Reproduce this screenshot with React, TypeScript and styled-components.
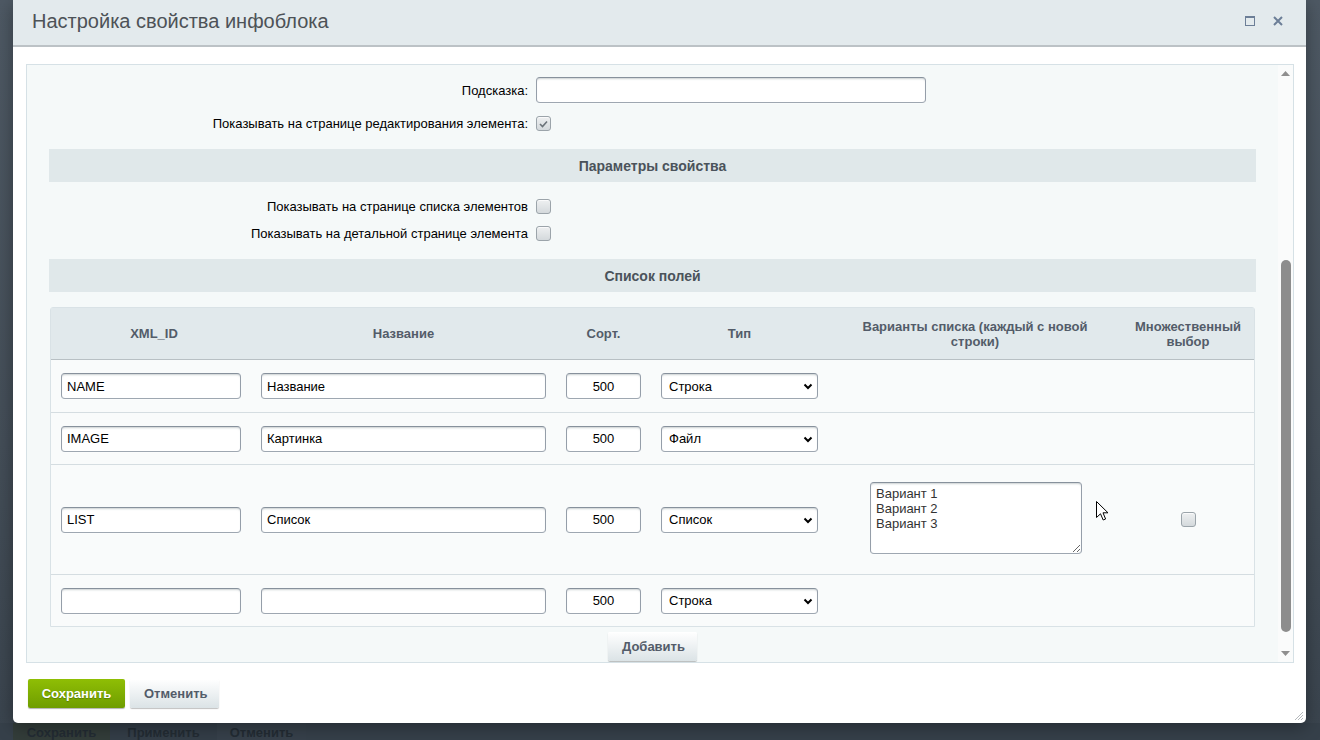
import styled, { createGlobalStyle } from 'styled-components';

const GlobalStyle = createGlobalStyle`
  html, body {
    margin: 0;
    padding: 0;
  }
  body {
    font-family: "Liberation Sans", Arial, sans-serif;
    font-size: 13px;
    background: #3b4550;
    overflow: hidden;
  }
  * {
    box-sizing: border-box;
  }
`;

const Page = styled.div`
  position: relative;
  width: 1320px;
  height: 740px;
  overflow: hidden;
  display: flex;
  flex-direction: column;
  background: linear-gradient(to bottom, #4e5964 0%, #444e58 60%, #3a444e 100%);
`;

const Dialog = styled.div`
  position: relative;
  margin-left: 13px;
  width: 1293px;
  height: 723px;
  flex-shrink: 0;
  background: #fff;
  border-radius: 0 0 5px 5px;
  box-shadow: 0 4px 18px rgba(0, 0, 0, 0.35);
  display: flex;
  flex-direction: column;
`;

const Header = styled.div`
  height: 47px;
  flex-shrink: 0;
  display: flex;
  align-items: center;
  justify-content: space-between;
  padding: 0 23px 3px 19px;
  background: #e3eaed;
  border-bottom: 2px solid #bcc2c6;
`;

const Title = styled.h1`
  margin: 0;
  font-size: 20px;
  font-weight: 400;
  color: #4d5257;
`;

const HeaderTools = styled.div`
  display: flex;
  align-items: center;
  gap: 17px;
`;

const ToolButton = styled.span`
  display: flex;
  width: 11px;
  height: 11px;
  align-items: center;
  justify-content: center;
  cursor: pointer;
`;

const Body = styled.div`
  padding: 17px 12px 0 13px;
`;

const ScrollBox = styled.div`
  height: 599px;
  display: flex;
  border: 1px solid #d6e1e6;
  background: #f5f9f9;
  overflow: hidden;
`;

const Content = styled.div`
  flex: 1;
  padding: 8px 22px 0 22px;
  display: flex;
  flex-direction: column;
`;

const Track = styled.div`
  width: 15px;
  flex-shrink: 0;
  display: flex;
  flex-direction: column;
  align-items: center;
  background: #fafbfb;
`;

const Arrow = styled.div`
  height: 17px;
  display: flex;
  align-items: center;
  justify-content: center;
`;

const Thumb = styled.div<{ $top: number; $height: number }>`
  width: 10px;
  margin-top: ${(p) => p.$top}px;
  height: ${(p) => p.$height}px;
  border-radius: 5px;
  background: #8d8d8d;
`;

const TrackFill = styled.div`
  flex: 1;
`;

const FormRow = styled.div<{ $h: number; $mt?: number }>`
  display: grid;
  grid-template-columns: 487px 1fr;
  align-items: center;
  height: ${(p) => p.$h}px;
  margin-top: ${(p) => p.$mt ?? 0}px;
`;

const Label = styled.label`
  text-align: right;
  padding-right: 8px;
  color: #000;
  font-size: 13px;
`;

const Band = styled.div<{ $mt: number }>`
  height: 33px;
  margin-top: ${(p) => p.$mt}px;
  display: flex;
  align-items: center;
  justify-content: center;
  background: #e0e8ea;
  color: #4b535b;
  font-weight: 700;
  font-size: 14px;
`;

const inputBase = `
  height: 26px;
  border: 1px solid;
  border-color: #87919c #959ea9 #9ea7b1 #959ea9;
  border-radius: 4px;
  background: #fff;
  box-shadow: 0 1px 0 0 rgba(255, 255, 255, 0.3), inset 0 2px 2px -1px rgba(180, 188, 191, 0.7);
  font-family: "Liberation Sans", Arial, sans-serif;
  font-size: 13px;
  color: #000;
  outline: none;
`;

const TextInput = styled.input<{ $w: number; $center?: boolean }>`
  ${inputBase}
  width: ${(p) => p.$w}px;
  padding: 0 5px;
  text-align: ${(p) => (p.$center ? 'center' : 'left')};
`;

const SelectWrap = styled.div`
  position: relative;
  width: 157px;
`;

const Select = styled.select`
  ${inputBase}
  appearance: none;
  width: 100%;
  padding: 0 20px 0 7px;
`;

const Chevron = styled.svg`
  position: absolute;
  right: 5px;
  top: 10px;
  pointer-events: none;
`;

const TextArea = styled.textarea`
  ${inputBase}
  width: 212px;
  height: 72px;
  margin: 0 0 3px 2px;
  padding: 3px 5px;
  line-height: 15px;
  resize: both;
  color: #333;
`;

const Check = styled.span`
  display: inline-flex;
  align-items: center;
  justify-content: center;
  width: 15px;
  height: 15px;
  border: 1px solid #9ba4aa;
  border-radius: 3px;
  background: linear-gradient(to bottom, #eef0f1 0%, #d4d9dc 100%);
  box-shadow: inset 0 1px 0 rgba(255, 255, 255, 0.7);
`;

const Table = styled.div`
  margin: 15px 1px 0;
  border: 1px solid #d9e2e6;
  border-radius: 3px 3px 0 0;
  background: #f9fbfb;
`;

const columns = '200px 305px 95px 177px 294px 1fr';

const HeadRow = styled.div`
  display: grid;
  grid-template-columns: ${columns};
  height: 52px;
  background: #e1e9ec;
  border-bottom: 1px solid #b8c0c4;
`;

const HeadCell = styled.div<{ $shift?: number }>`
  display: flex;
  align-items: center;
  justify-content: center;
  padding-left: ${(p) => p.$shift ?? 0}px;
  text-align: center;
  color: #535c69;
  font-weight: 700;
  font-size: 13px;
  line-height: 15px;
`;

const Row = styled.div<{ $h: number; $first?: boolean }>`
  display: grid;
  grid-template-columns: ${columns};
  height: ${(p) => p.$h}px;
  border-top: ${(p) => (p.$first ? 'none' : '1px solid #d5dde1')};
`;

const Cell = styled.div<{ $center?: boolean }>`
  display: flex;
  align-items: center;
  justify-content: ${(p) => (p.$center ? 'center' : 'flex-start')};
  padding-left: ${(p) => (p.$center ? 0 : 10)}px;
`;

const LightButton = styled.button`
  height: 29px;
  padding: 0 14px;
  border: none;
  border-radius: 2px;
  background: linear-gradient(to bottom, #ffffff 0%, #dbe3e6 100%);
  box-shadow: 0 1px 1px rgba(0, 0, 0, 0.25), inset 0 1px 0 #fff;
  color: #535c69;
  font-family: "Liberation Sans", Arial, sans-serif;
  font-weight: 700;
  font-size: 13px;
  cursor: pointer;
`;

const AddButton = styled(LightButton)`
  align-self: center;
  width: 89px;
  margin-top: 5px;
`;

const Footer = styled.div`
  display: flex;
  gap: 5px;
  padding: 16px 0 0 15px;
`;

const SaveButton = styled.button`
  width: 97px;
  height: 29px;
  border: none;
  border-radius: 2px;
  background: linear-gradient(to bottom, #8fbe05 0%, #6f9d00 100%);
  box-shadow: 0 1px 1px rgba(0, 0, 0, 0.3);
  color: #fff;
  text-shadow: 0 1px 1px rgba(0, 0, 0, 0.25);
  font-family: "Liberation Sans", Arial, sans-serif;
  font-weight: 700;
  font-size: 13px;
  cursor: pointer;
`;

const CancelButton = styled(LightButton)`
  width: 89px;
`;

const Grip = styled.svg`
  position: absolute;
  right: 2px;
  bottom: 2px;
`;

const UnderBar = styled.div`
  flex: 1;
  display: flex;
  padding-left: 13px;
  background: #36404a;
`;

const UnderButton = styled.div<{ $w: number; $bg: string }>`
  width: ${(p) => p.$w}px;
  padding-top: 1px;
  text-align: center;
  line-height: 17px;
  font-weight: 700;
  font-size: 13px;
  color: #232c34;
  background: ${(p) => p.$bg};
`;

const Cursor = styled.svg`
  position: absolute;
  left: 1096px;
  top: 501px;
  pointer-events: none;
`;

type Field = {
  code: string;
  name: string;
  type: string;
  variants?: string;
  multiple?: boolean;
  height: number;
};

const fields: Field[] = [
  { code: 'NAME', name: 'Название', type: 'Строка', height: 52 },
  { code: 'IMAGE', name: 'Картинка', type: 'Файл', height: 52 },
  {
    code: 'LIST',
    name: 'Список',
    type: 'Список',
    variants: 'Вариант 1\nВариант 2\nВариант 3',
    multiple: true,
    height: 110,
  },
  { code: '', name: '', type: 'Строка', height: 52 },
];

const types = ['Строка', 'Число', 'Файл', 'Список'];

const CheckMark = () => (
  <svg width="9" height="8" viewBox="0 0 9 8">
    <path d="M1 4 L3.5 6.5 L8 1.5" fill="none" stroke="#6b7379" strokeWidth="1.6" />
  </svg>
);

export default function App() {
  return (
    <Page>
      <GlobalStyle />
      <Dialog>
        <Header>
          <Title>Настройка свойства инфоблока</Title>
          <HeaderTools>
            <ToolButton>
              <svg width="10" height="10" viewBox="0 0 10 10">
                <rect x="0.5" y="0.5" width="9" height="9" fill="none" stroke="#6c7e97" />
                <line x1="0" y1="1.5" x2="10" y2="1.5" stroke="#6c7e97" />
              </svg>
            </ToolButton>
            <ToolButton>
              <svg width="10" height="10" viewBox="0 0 10 10">
                <path d="M1 1 L9 9 M9 1 L1 9" stroke="#6c7e97" strokeWidth="2" />
              </svg>
            </ToolButton>
          </HeaderTools>
        </Header>

        <Body>
          <ScrollBox>
            <Content>
              <FormRow $h={34}>
                <Label>Подсказка:</Label>
                <TextInput $w={390} defaultValue="" />
              </FormRow>
              <FormRow $h={33}>
                <Label>Показывать на странице редактирования элемента:</Label>
                <Check>
                  <CheckMark />
                </Check>
              </FormRow>

              <Band $mt={9}>Параметры свойства</Band>

              <FormRow $h={27} $mt={11}>
                <Label>Показывать на странице списка элементов</Label>
                <Check />
              </FormRow>
              <FormRow $h={27}>
                <Label>Показывать на детальной странице элемента</Label>
                <Check />
              </FormRow>

              <Band $mt={12}>Список полей</Band>

              <Table>
                <HeadRow>
                  <HeadCell $shift={6}>XML_ID</HeadCell>
                  <HeadCell>Название</HeadCell>
                  <HeadCell>Сорт.</HeadCell>
                  <HeadCell>Тип</HeadCell>
                  <HeadCell>
                    Варианты списка (каждый с новой
                    <br />
                    строки)
                  </HeadCell>
                  <HeadCell>
                    Множественный
                    <br />
                    выбор
                  </HeadCell>
                </HeadRow>
                {fields.map((f, i) => (
                  <Row key={i} $h={f.height} $first={i === 0}>
                    <Cell>
                      <TextInput $w={180} defaultValue={f.code} />
                    </Cell>
                    <Cell>
                      <TextInput $w={285} defaultValue={f.name} />
                    </Cell>
                    <Cell>
                      <TextInput $w={75} $center defaultValue="500" />
                    </Cell>
                    <Cell>
                      <SelectWrap>
                        <Select defaultValue={f.type}>
                          {types.map((t) => (
                            <option key={t}>{t}</option>
                          ))}
                        </Select>
                        <Chevron width="10" height="7" viewBox="0 0 10 7">
                          <path d="M1.5 1.5 L5 5 L8.5 1.5" fill="none" stroke="#000" strokeWidth="2" />
                        </Chevron>
                      </SelectWrap>
                    </Cell>
                    <Cell $center>{f.variants && <TextArea defaultValue={f.variants} />}</Cell>
                    <Cell $center>{f.multiple && <Check />}</Cell>
                  </Row>
                ))}
              </Table>

              <AddButton>Добавить</AddButton>
            </Content>

            <Track>
              <Arrow>
                <svg width="9" height="5" viewBox="0 0 9 5">
                  <polygon points="0,5 4.5,0 9,5" fill="#8f8f8f" />
                </svg>
              </Arrow>
              <Thumb $top={178} $height={372} />
              <TrackFill />
              <Arrow>
                <svg width="9" height="5" viewBox="0 0 9 5">
                  <polygon points="0,0 4.5,5 9,0" fill="#8f8f8f" />
                </svg>
              </Arrow>
            </Track>
          </ScrollBox>
        </Body>

        <Footer>
          <SaveButton>Сохранить</SaveButton>
          <CancelButton>Отменить</CancelButton>
        </Footer>

        <Grip width="10" height="10" viewBox="0 0 10 10">
          <path d="M9 1 L1 9 M9 4 L4 9 M9 7 L7 9" stroke="#b5b9bc" strokeWidth="1" />
        </Grip>
      </Dialog>

      <UnderBar>
        <UnderButton $w={97} $bg="#333d3a">
          Сохранить
        </UnderButton>
        <UnderButton $w={107} $bg="#343e48">
          Применить
        </UnderButton>
        <UnderButton $w={89} $bg="#37414b">
          Отменить
        </UnderButton>
      </UnderBar>

      <Cursor width="13" height="20" viewBox="0 0 13 20">
        <path
          d="M0.5 0.5 L0.5 16.5 L4.5 12.8 L7.2 19 L9.6 18 L7 11.8 L12 11.8 Z"
          fill="#fff"
          stroke="#000"
          strokeWidth="1"
          strokeLinejoin="round"
        />
      </Cursor>
    </Page>
  );
}
